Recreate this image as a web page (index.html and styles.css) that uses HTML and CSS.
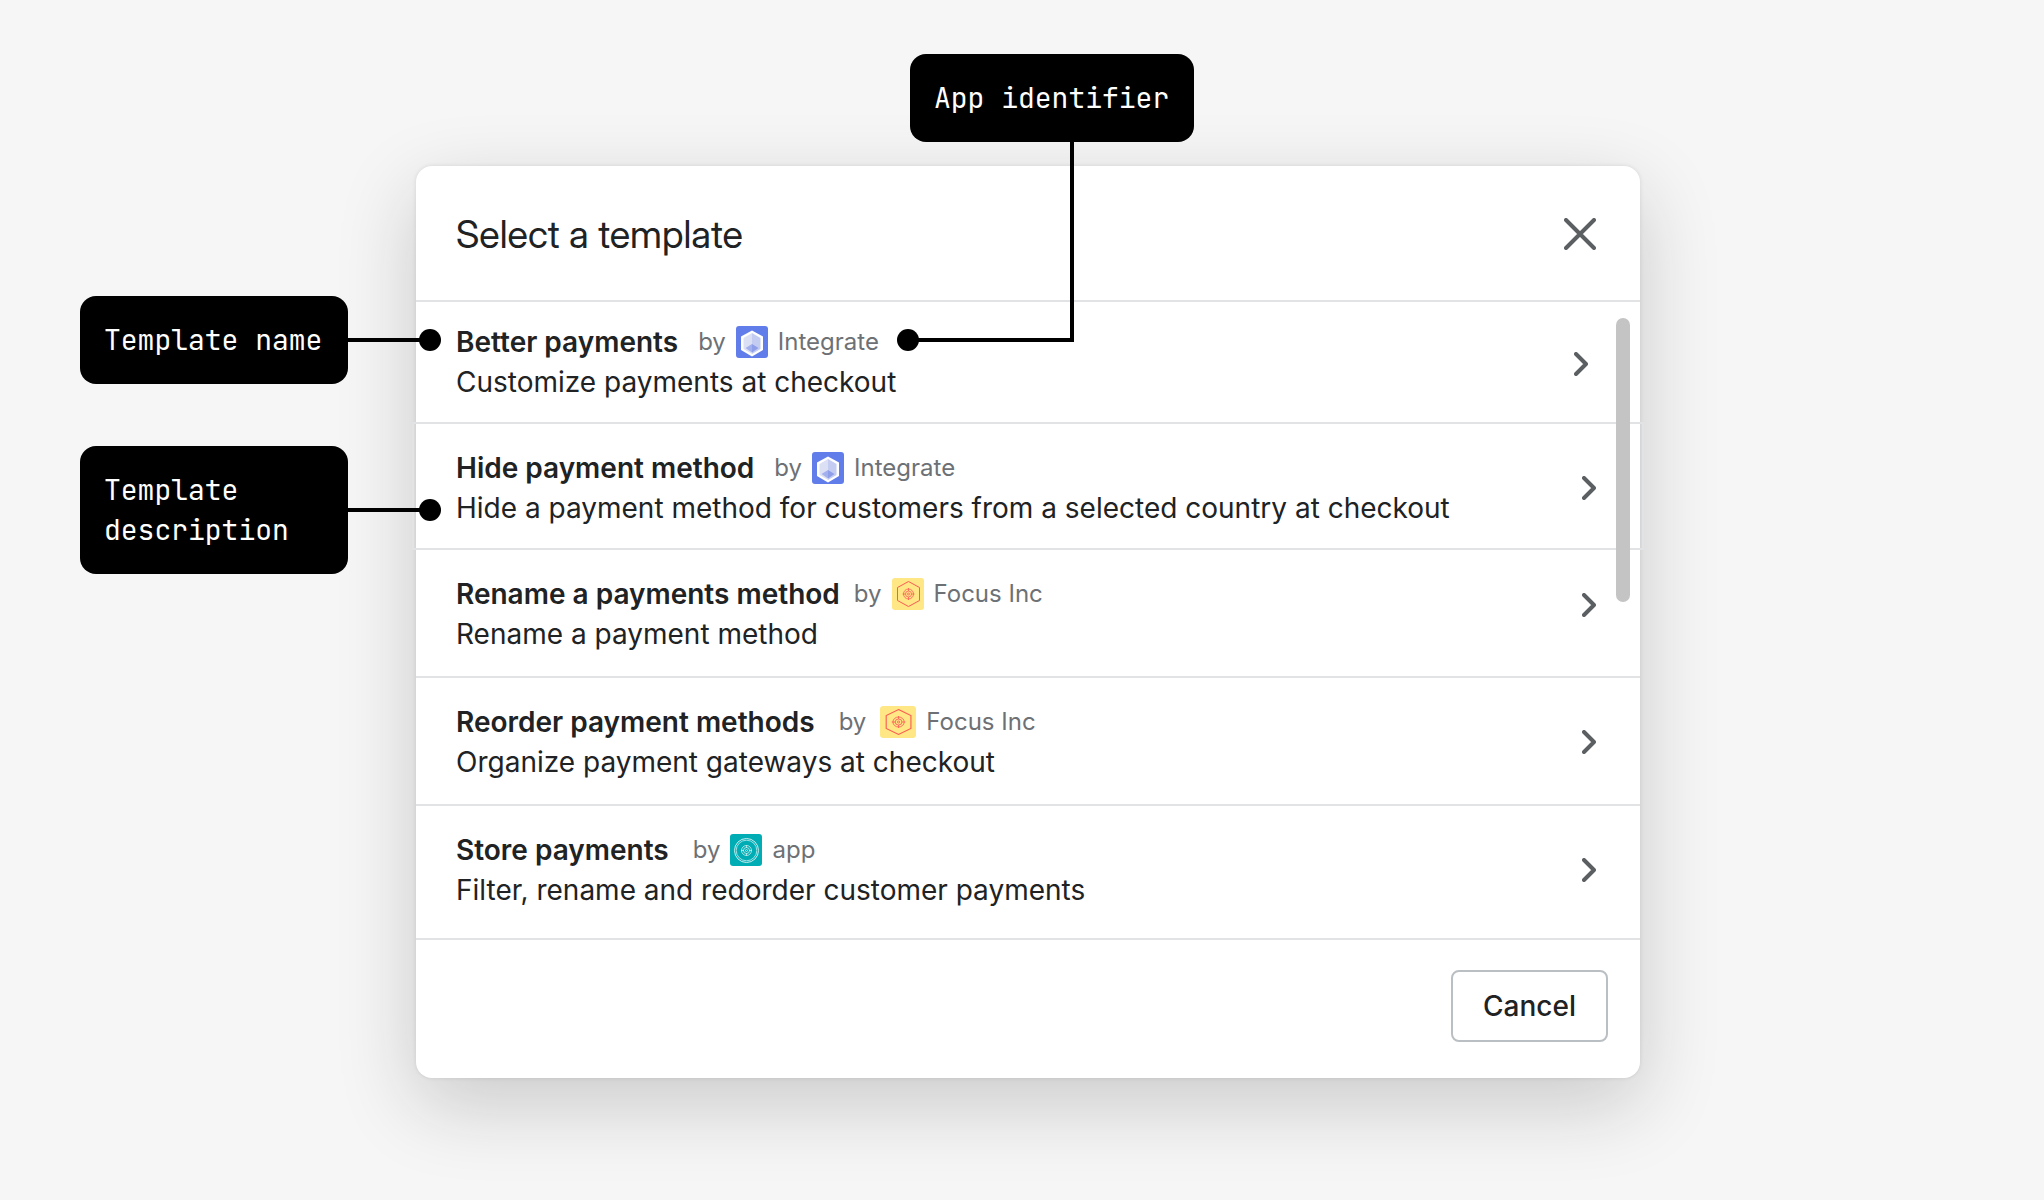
FILE: index.html
```html
<!DOCTYPE html>
<html lang="en">
<head>
<meta charset="utf-8">
<title>Select a template</title>
<link rel="stylesheet" href="styles.css">
</head>
<body>
<svg class="sprite" aria-hidden="true">
  <symbol id="integrate" viewBox="0 0 32 32">
    <rect width="32" height="32" rx="3" fill="#617dea"/>
    <path d="M16 4.500l11 6v13.500l-11 6.500-11-6.500V10.500z" fill="#fff"/>
    <path d="M16 7L7.500 12v11l8.500 5z" fill="#dce0f5"/>
    <path d="M16 7l8.500 5v11L16 28z" fill="#c4ccf1"/>
    <path d="M16 18v8.500L9.500 22z" fill="#a3b0ee"/>
    <path d="M16 18v8.500l6.500-4.500z" fill="#8e9ee9"/>
  </symbol>
  <symbol id="focus" viewBox="0 0 32 32" preserveAspectRatio="none">
    <rect width="32" height="32" rx="3" fill="#ffe785"/>
    <g fill="none" stroke="#fb5a55">
      <path d="M16.500 3.500l11 6v13l-11 6-11-6v-13z"/>
      <circle cx="16.500" cy="16" r="5" stroke-width=".8"/>
      <circle cx="16.500" cy="16" r="3" stroke-width=".8"/>
      <circle cx="16.500" cy="16" r="1" stroke-width=".8"/>
      <path d="M16.500 10v3M16.500 19v3M10.500 16h3M19.500 16h3" stroke-width=".8"/>
    </g>
  </symbol>
  <symbol id="store" viewBox="0 0 32 32">
    <rect width="32" height="32" rx="3" fill="#00adb5"/>
    <g fill="none" stroke="#c8edef">
      <circle cx="16.500" cy="16.500" r="12"/>
      <circle cx="16.500" cy="16.500" r="10.300" stroke-width=".8"/>
      <circle cx="16.500" cy="16.500" r="5" stroke-width=".8"/>
      <circle cx="16.500" cy="16.500" r="3" stroke-width=".8"/>
      <circle cx="16.500" cy="16.500" r="1" stroke-width=".8"/>
      <path d="M16.500 11v3M16.500 19v3M11 16.500h3M19 16.500h3" stroke-width=".8"/>
    </g>
  </symbol>
  <symbol id="chevron" viewBox="0 0 14 24">
    <path d="M2 2l10 10L2 22" fill="none" stroke="#5c5f62" stroke-width="4" stroke-linecap="round" stroke-linejoin="round"/>
  </symbol>
</svg>
<main class="stage">
  <section class="modal" role="dialog" aria-labelledby="modal-title">
    <header class="modal-header">
      <h1 class="modal-title" id="modal-title">Select a template</h1>
      <button class="close" type="button" aria-label="Close">
        <svg width="32" height="32" viewBox="0 0 32 32" aria-hidden="true"><path d="M2 2l28 28M30 2L2 30" fill="none" stroke="#5c5f62" stroke-width="4" stroke-linecap="round"/></svg>
      </button>
    </header>
    <ul class="templates">
      <li><a class="template template-first" href="#better-payments">
        <span class="text">
          <span class="heading gap-m"><strong class="name">Better payments</strong><span class="app">by <svg class="logo" aria-hidden="true"><use href="#integrate"/></svg><span class="app-name">Integrate</span></span></span>
          <span class="description">Customize payments at checkout</span>
        </span>
        <svg class="chevron" aria-hidden="true"><use href="#chevron"/></svg>
      </a></li>
      <li><a class="template template-focused" href="#hide-payment-method">
        <span class="text">
          <span class="heading gap-m"><strong class="name">Hide payment method</strong><span class="app">by <svg class="logo" aria-hidden="true"><use href="#integrate"/></svg><span class="app-name">Integrate</span></span></span>
          <span class="description">Hide a payment method for customers from a selected country at checkout</span>
        </span>
        <svg class="chevron" aria-hidden="true"><use href="#chevron"/></svg>
      </a></li>
      <li><a class="template template-raised" href="#rename-payments-method">
        <span class="text">
          <span class="heading gap-s"><strong class="name">Rename a payments method</strong><span class="app">by <svg class="logo" aria-hidden="true"><use href="#focus"/></svg><span class="app-name">Focus Inc</span></span></span>
          <span class="description">Rename a payment method</span>
        </span>
        <svg class="chevron" aria-hidden="true"><use href="#chevron"/></svg>
      </a></li>
      <li><a class="template" href="#reorder-payment-methods">
        <span class="text">
          <span class="heading gap-l"><strong class="name">Reorder payment methods</strong><span class="app">by <svg class="logo logo-wide" aria-hidden="true"><use href="#focus"/></svg><span class="app-name">Focus Inc</span></span></span>
          <span class="description">Organize payment gateways at checkout</span>
        </span>
        <svg class="chevron" aria-hidden="true"><use href="#chevron"/></svg>
      </a></li>
      <li><a class="template template-last" href="#store-payments">
        <span class="text">
          <span class="heading gap-l"><strong class="name">Store payments</strong><span class="app">by <svg class="logo" aria-hidden="true"><use href="#store"/></svg><span class="app-name">app</span></span></span>
          <span class="description">Filter, rename and redorder customer payments</span>
        </span>
        <svg class="chevron" aria-hidden="true"><use href="#chevron"/></svg>
      </a></li>
    </ul>
    <footer class="modal-footer"><button class="cancel" type="button">Cancel</button></footer>
    <div class="scroll-thumb"></div>
  </section>
  <p class="callout callout-name">Template name</p>
  <p class="callout callout-description">Template description</p>
  <p class="callout callout-app">App identifier</p>
</main>
</body>
</html>
```
FILE: styles.css
```css
*, *::before, *::after { box-sizing: border-box; }
body {
  margin: 0;
  min-height: 100vh;
  background: #f6f6f6;
  color: #202223;
  font-family: Inter, "Liberation Sans", sans-serif;
  font-size: 28px;
  line-height: 40px;
}
.sprite { position: absolute; width: 0; height: 0; }
.stage { position: relative; padding: 166px 404px 122px 416px; }
.modal {
  position: relative;
  background: #fff;
  border-radius: 16px;
  box-shadow: 0 0 4px rgba(0, 0, 0, .1), 0 26px 80px rgba(23, 24, 24, .2);
}
.modal-header {
  display: flex;
  align-items: center;
  justify-content: space-between;
  padding: 40px 40px 38px;
  border-bottom: 2px solid #e1e3e5;
}
.modal-title {
  margin: 0;
  font-family: "Inter Display", Inter, "Liberation Sans", sans-serif;
  font-size: 38px;
  font-weight: 400;
  line-height: 56px;
}
.close { display: flex; padding: 4px; border: 0; background: none; }
.templates { margin: 0; padding: 0; list-style: none; }
.template {
  display: flex;
  align-items: center;
  justify-content: space-between;
  padding: 24px 44px 22px 40px;
  border-bottom: 2px solid #e1e3e5;
  color: inherit;
  text-decoration: none;
}
.template-first { padding: 20px 52px 20px 40px; border-bottom: 0; }
.template-first .chevron { margin-top: 4px; }
.template-focused {
  margin: 0 -4px;
  padding: 24px 46px 20px 42px;
  border: 2px solid #e1e3e5;
}
.template-raised .chevron { margin-bottom: 18px; }
.template-last { padding-bottom: 28px; }
.text { display: flex; flex-direction: column; }
.heading { display: flex; align-items: center; height: 40px; }
.gap-s { gap: 14px; }
.gap-m { gap: 20px; }
.gap-l { gap: 24px; }
.name { font-weight: 600; }
.app { display: flex; align-items: center; gap: 10px; color: #6d7175; font-size: 24px; }
.logo { width: 32px; height: 32px; }
.logo-wide { width: 36px; margin-left: 4px; }
.chevron { flex: none; width: 14px; height: 24px; }
.modal-footer { display: flex; justify-content: flex-end; padding: 30px 32px 36px; }
.cancel {
  padding: 14px 30px;
  border: 2px solid #babfc3;
  border-radius: 8px;
  background: #fff;
  color: inherit;
  font: inherit;
  font-weight: 500;
}
.scroll-thumb {
  position: absolute;
  top: 152px;
  right: 10px;
  width: 14px;
  height: 284px;
  border-radius: 7px;
  background: #c4c4c4;
}
.callout {
  position: absolute;
  margin: 0;
  padding: 24px;
  border-radius: 16px;
  background: #000;
  color: #fff;
  font-family: "JetBrains Mono", "DejaVu Sans Mono", monospace;
}
.callout::before, .callout::after { content: ""; position: absolute; }
.callout::after { width: 22px; height: 22px; border-radius: 50%; background: #000; }
.callout-name { top: 296px; left: 80px; width: 268px; }
.callout-description { top: 446px; left: 80px; width: 268px; }
.callout-name::before, .callout-description::before {
  top: 42px;
  left: 100%;
  width: 82px;
  height: 4px;
  background: #000;
}
.callout-description::before { top: 62px; }
.callout-name::after { top: 33px; left: 339px; }
.callout-description::after { top: 53px; left: 339px; }
.callout-app { top: 54px; left: 910px; width: 284px; }
.callout-app::before {
  top: 100%;
  left: 0;
  width: 164px;
  height: 200px;
  border: solid #000;
  border-width: 0 4px 4px 0;
}
.callout-app::after { top: 275px; left: -13px; }
```
